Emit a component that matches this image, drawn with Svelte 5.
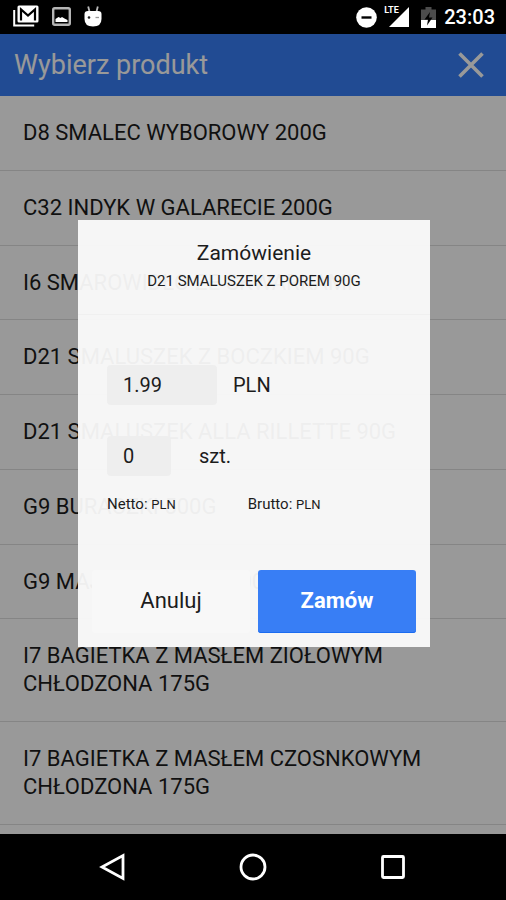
<script>
  const products = [
    'D8 SMALEC WYBOROWY 200G',
    'C32 INDYK W GALARECIE 200G',
    'I6 SMAROWIDŁO ZE SKWARKAMI',
    'D21 SMALUSZEK Z BOCZKIEM 90G',
    'D21 SMALUSZEK ALLA RILLETTE 90G',
    'G9 BURACZKI 500G',
    'G9 MAJONEZ LEKKI 500G',
    'I7 BAGIETKA Z MASŁEM ZIOŁOWYM CHŁODZONA 175G',
    'I7 BAGIETKA Z MASŁEM CZOSNKOWYM CHŁODZONA 175G',
  ];
  let price = $state('1.99');
  let quantity = $state('0');
</script>

<div class="screen">
  <div class="status">
    <div class="group left">
      <svg width="26" height="22" viewBox="0 0 26 22">
        <path d="M1.2 5v15.5h20" fill="none" stroke="#fff" stroke-width="2" />
        <rect x="4.500" y="0.500" width="21" height="17" rx="1.500" fill="#fff" />
        <path d="M8 15.500V4.500l7 6 7-6v11" fill="none" stroke="#000" stroke-width="2.200" />
      </svg>
      <svg width="19" height="19" viewBox="0 0 19 19">
        <rect x="1.200" y="1.200" width="16.600" height="16.600" rx="1.500" fill="none" stroke="#b5b5b5" stroke-width="2.400" />
        <path d="M3.500 15v-3l3-2 2 1 1.500-1 2.500 1.500 3 1.500v2z" fill="#fff" />
      </svg>
      <svg width="18" height="21" viewBox="0 0 18 21">
        <path d="M4.200 0.500l1.500 6M13.800 0.500l-1.500 6" stroke="#bbb" stroke-width="1.800" />
        <path d="M0.500 8q0-3 3.500-3h10q3.500 0 3.500 3v5q0 7.500-8.500 7.500T0.500 13z" fill="#fff" />
        <circle cx="5" cy="11.500" r="1.300" fill="#222" />
        <path d="M11.500 11.500h3.500" stroke="#999" stroke-width="1.300" />
      </svg>
    </div>
    <div class="group">
      <svg width="21" height="21" viewBox="0 0 21 21">
        <circle cx="10.500" cy="10.500" r="10.300" fill="#fff" />
        <path d="M5.500 10.500h10" stroke="#000" stroke-width="2.400" />
      </svg>
      <div class="signal">
        <svg width="20" height="20" viewBox="0 0 20 20"><path d="M20 0v20H0z" fill="#fff" /></svg>
        <span class="lte">LTE</span>
      </div>
      <div class="group power">
        <svg width="15" height="21" viewBox="0 0 15 21">
          <path d="M4.500 0h6v2.500H15V21H0V2.500h4.500z" fill="#4c4c4c" />
          <path d="M0 13h15v8H0z" fill="#fff" />
          <path d="M9 5l-5.500 7.500h3.500L6 18.500l5.500-8H8z" fill="#000" />
        </svg>
        <span class="clock">23:03</span>
      </div>
    </div>
  </div>

  <main>
    <header>
      <h1>Wybierz produkt</h1>
      <button class="close" aria-label="Zamknij">
        <svg width="26" height="26" viewBox="0 0 26 26"><path d="M1.500 1.500l23 23M24.500 1.500l-23 23" stroke="#fff" stroke-width="3.600" /></svg>
      </button>
    </header>
    <ul>
      {#each products as product}
        <li>{product}</li>
      {/each}
    </ul>

    <div class="backdrop">
      <div class="popup" role="dialog" aria-labelledby="popup-title">
        <div class="head">
          <h2 id="popup-title">Zamówienie</h2>
          <p>D21 SMALUSZEK Z POREM 90G</p>
        </div>
        <div class="body">
          <div class="field">
            <input id="price" class="price" bind:value={price} />
            <label for="price">PLN</label>
          </div>
          <div class="field amount">
            <input id="quantity" class="quantity" bind:value={quantity} />
            <label for="quantity">szt.</label>
          </div>
          <div class="totals">
            <span>Netto: <small>PLN</small></span>
            <span>Brutto: <small>PLN</small></span>
          </div>
        </div>
        <div class="actions">
          <button class="cancel">Anuluj</button>
          <button class="order">Zamów</button>
        </div>
      </div>
    </div>
  </main>

  <nav>
    <button aria-label="Wstecz">
      <svg width="28" height="28" viewBox="0 0 28 28"><path d="M24 2.500v23L3 14z" fill="none" stroke="#fff" stroke-width="2.800" /></svg>
    </button>
    <button aria-label="Ekran główny">
      <svg width="28" height="28" viewBox="0 0 28 28"><circle cx="14" cy="14" r="12" fill="none" stroke="#fff" stroke-width="2.800" /></svg>
    </button>
    <button aria-label="Ostatnie">
      <svg width="28" height="28" viewBox="0 0 28 28"><rect x="3.500" y="3.500" width="21" height="21" rx="1" fill="none" stroke="#fff" stroke-width="2.800" /></svg>
    </button>
  </nav>
</div>

<style>
  :global(body) {
    margin: 0;
    background: #000;
  }
  .screen {
    display: flex;
    flex-direction: column;
    min-height: 100vh;
    font-family: Roboto, "Noto Sans", sans-serif;
    color: #1c1c1c;
  }
  button {
    display: flex;
    align-items: center;
    justify-content: center;
    padding: 0;
    border: 0;
    background: none;
    color: inherit;
    font-family: inherit;
  }
  svg {
    display: block;
  }
  .status {
    display: flex;
    align-items: center;
    justify-content: space-between;
    height: 34px;
    padding: 0 11px 0 13px;
    background: #000;
    color: #fff;
  }
  .group {
    display: flex;
    align-items: center;
    gap: 12px;
  }
  .left {
    gap: 13px;
    padding-bottom: 2px;
  }
  .power {
    gap: 8px;
  }
  .signal {
    position: relative;
  }
  .lte {
    position: absolute;
    left: -5px;
    top: -2px;
    font-size: 9px;
    line-height: 10px;
    font-weight: 700;
  }
  .clock {
    font-size: 20px;
    font-weight: 500;
  }
  main {
    position: relative;
    flex: 1;
    display: flex;
    flex-direction: column;
    background: #fff;
  }
  header {
    display: flex;
    align-items: center;
    justify-content: space-between;
    height: 62px;
    padding: 0 22px 0 14px;
    background: #387ef5;
    color: #fff;
  }
  h1 {
    margin: 0;
    font-size: 27px;
    font-weight: 400;
  }
  ul {
    flex: 1;
    display: flex;
    flex-direction: column;
    margin: 0;
    padding: 0 0 9px;
    list-style: none;
  }
  li {
    flex: 1 0 auto;
    padding: 23px 24px 22px 23px;
    border-bottom: 1px solid #dedede;
    font-size: 22px;
    line-height: 28px;
  }
  .backdrop {
    position: absolute;
    inset: 0;
    display: flex;
    align-items: center;
    justify-content: center;
    padding: 0 76px 2px 78px;
    background: rgba(0, 0, 0, 0.4);
  }
  .popup {
    flex: 1;
    background: rgba(252, 252, 252, 0.94);
  }
  .head {
    padding: 20px 14px 22px;
    border-bottom: 1px solid #f0f0f0;
    text-align: center;
  }
  h2 {
    margin: 0;
    font-size: 21px;
    line-height: 26px;
    font-weight: 400;
  }
  p {
    margin: 4px 0 0;
    font-size: 15px;
    line-height: 22px;
  }
  .body {
    padding: 50px 29px 55px;
  }
  .field {
    display: flex;
    align-items: center;
    gap: 16px;
    font-size: 20px;
  }
  .amount {
    gap: 28px;
    margin-top: 31px;
  }
  input {
    box-sizing: border-box;
    height: 40px;
    padding: 0 16px;
    border: 0;
    border-radius: 4px;
    background: #eee;
    color: inherit;
    font: inherit;
  }
  .price {
    width: 110px;
  }
  .quantity {
    width: 64px;
  }
  .totals {
    display: flex;
    gap: 72px;
    margin-top: 18px;
    font-size: 15px;
    line-height: 20px;
  }
  small {
    font-size: 13px;
  }
  .actions {
    display: flex;
    gap: 8px;
    padding: 0 14px 14px;
  }
  .actions button {
    flex: 1;
    height: 63px;
    border-radius: 3px;
    padding-bottom: 2px;
    font-size: 22px;
  }
  .cancel {
    background: #f8f8f8;
  }
  .actions .order {
    background: #387ef5;
    box-shadow: inset 0 -1px #1a6bf0;
    color: #fff;
    font-weight: 700;
  }
  nav {
    display: flex;
    align-items: center;
    justify-content: space-around;
    height: 66px;
    padding: 0 43px;
    background: #000;
  }
</style>
